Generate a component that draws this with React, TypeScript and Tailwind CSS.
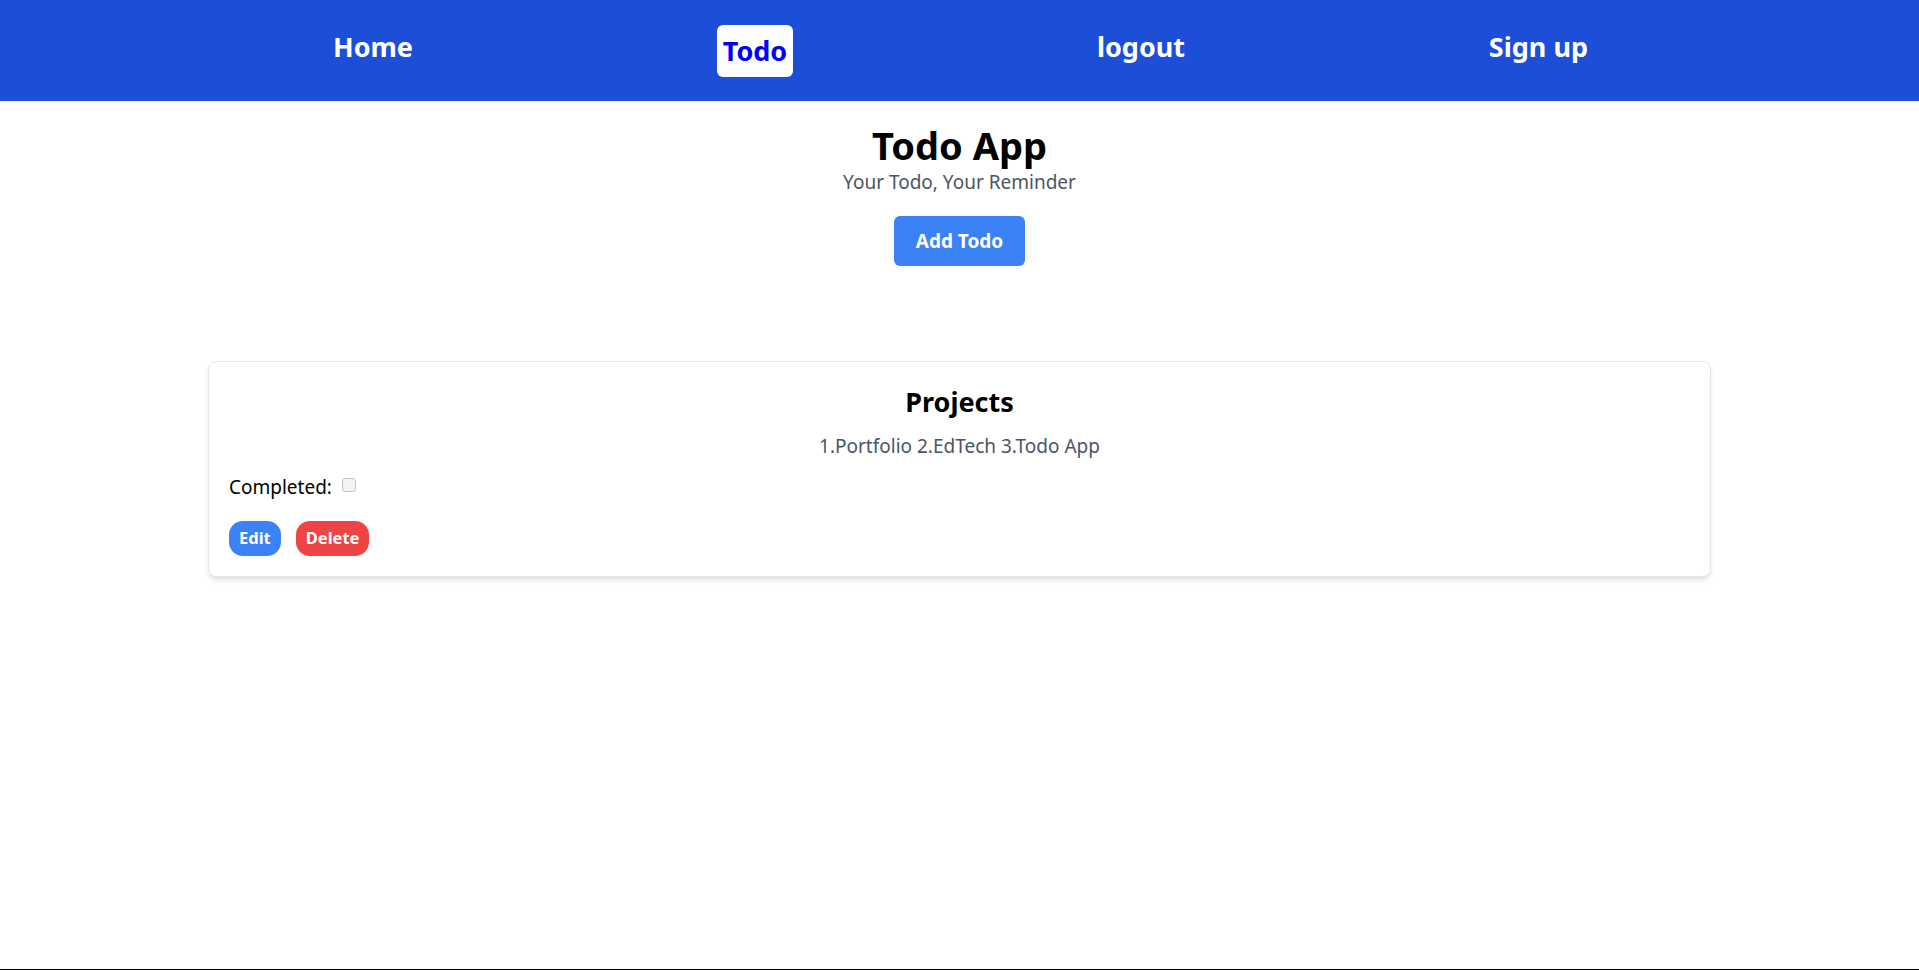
import React from "react";

export default function App() {
  return (
    <div
      className="h-[970px] flex flex-col bg-white"
      style={{ fontFamily: '"Noto Sans", "Open Sans", Arial, sans-serif' }}
    >
      <nav className="h-[101px] bg-[#1d4ed8] flex items-start justify-between pl-[333px] pr-[331px] pt-[25px]">
        <a className="text-white text-[27px] font-bold leading-[36px] pt-[4px]">Home</a>
        <a className="bg-white rounded-md px-[6px] py-2 text-[#0000ff] text-[27px] font-bold leading-[36px]">Todo</a>
        <a className="text-white text-[27px] font-bold leading-[36px] pt-[4px]">logout</a>
        <a className="text-white text-[27px] font-bold leading-[36px] pt-[4px]">Sign up</a>
      </nav>

      <main className="flex-1 flex flex-col items-center">
        <h1 className="mt-[22px] text-[38px] leading-[44px] font-bold text-black">Todo App</h1>
        <p className="mt-[1px] text-[19px] leading-[28px] text-[#4b5563]">Your Todo, Your Reminder</p>
        <button className="mt-[20px] h-[50px] px-[22px] rounded-md bg-[#3b82f6] text-white text-[19px] font-bold">
          Add Todo
        </button>

        <div className="w-full px-[208px] mt-[95px]">
          <div className="rounded-lg border border-[#e5e7eb] shadow-md bg-white p-5">
            <h2 className="text-center text-[27px] leading-[40px] font-bold text-black">Projects</h2>
            <p className="mt-[10px] text-center text-[19px] leading-[28px] text-[#4b5563]">
              1.Portfolio 2.EdTech 3.Todo App
            </p>
            <div className="mt-[13px] flex items-start text-[19px] leading-[28px] text-black">
              <span>Completed:</span>
              <span className="ml-[10px] mt-[5px] w-[14px] h-[14px] rounded-[3px] border border-[#c4c4c4] bg-[#f3f3f3]" />
            </div>
            <div className="mt-[20px] flex gap-[15px]">
              <button className="h-[35px] px-[10px] rounded-[14px] bg-[#3b82f6] text-white text-[16.5px] font-bold">Edit</button>
              <button className="h-[35px] px-[10px] rounded-[14px] bg-[#ef4444] text-white text-[16.5px] font-bold">Delete</button>
            </div>
          </div>
        </div>
      </main>
      <div className="h-px bg-black" />
    </div>
  );
}
